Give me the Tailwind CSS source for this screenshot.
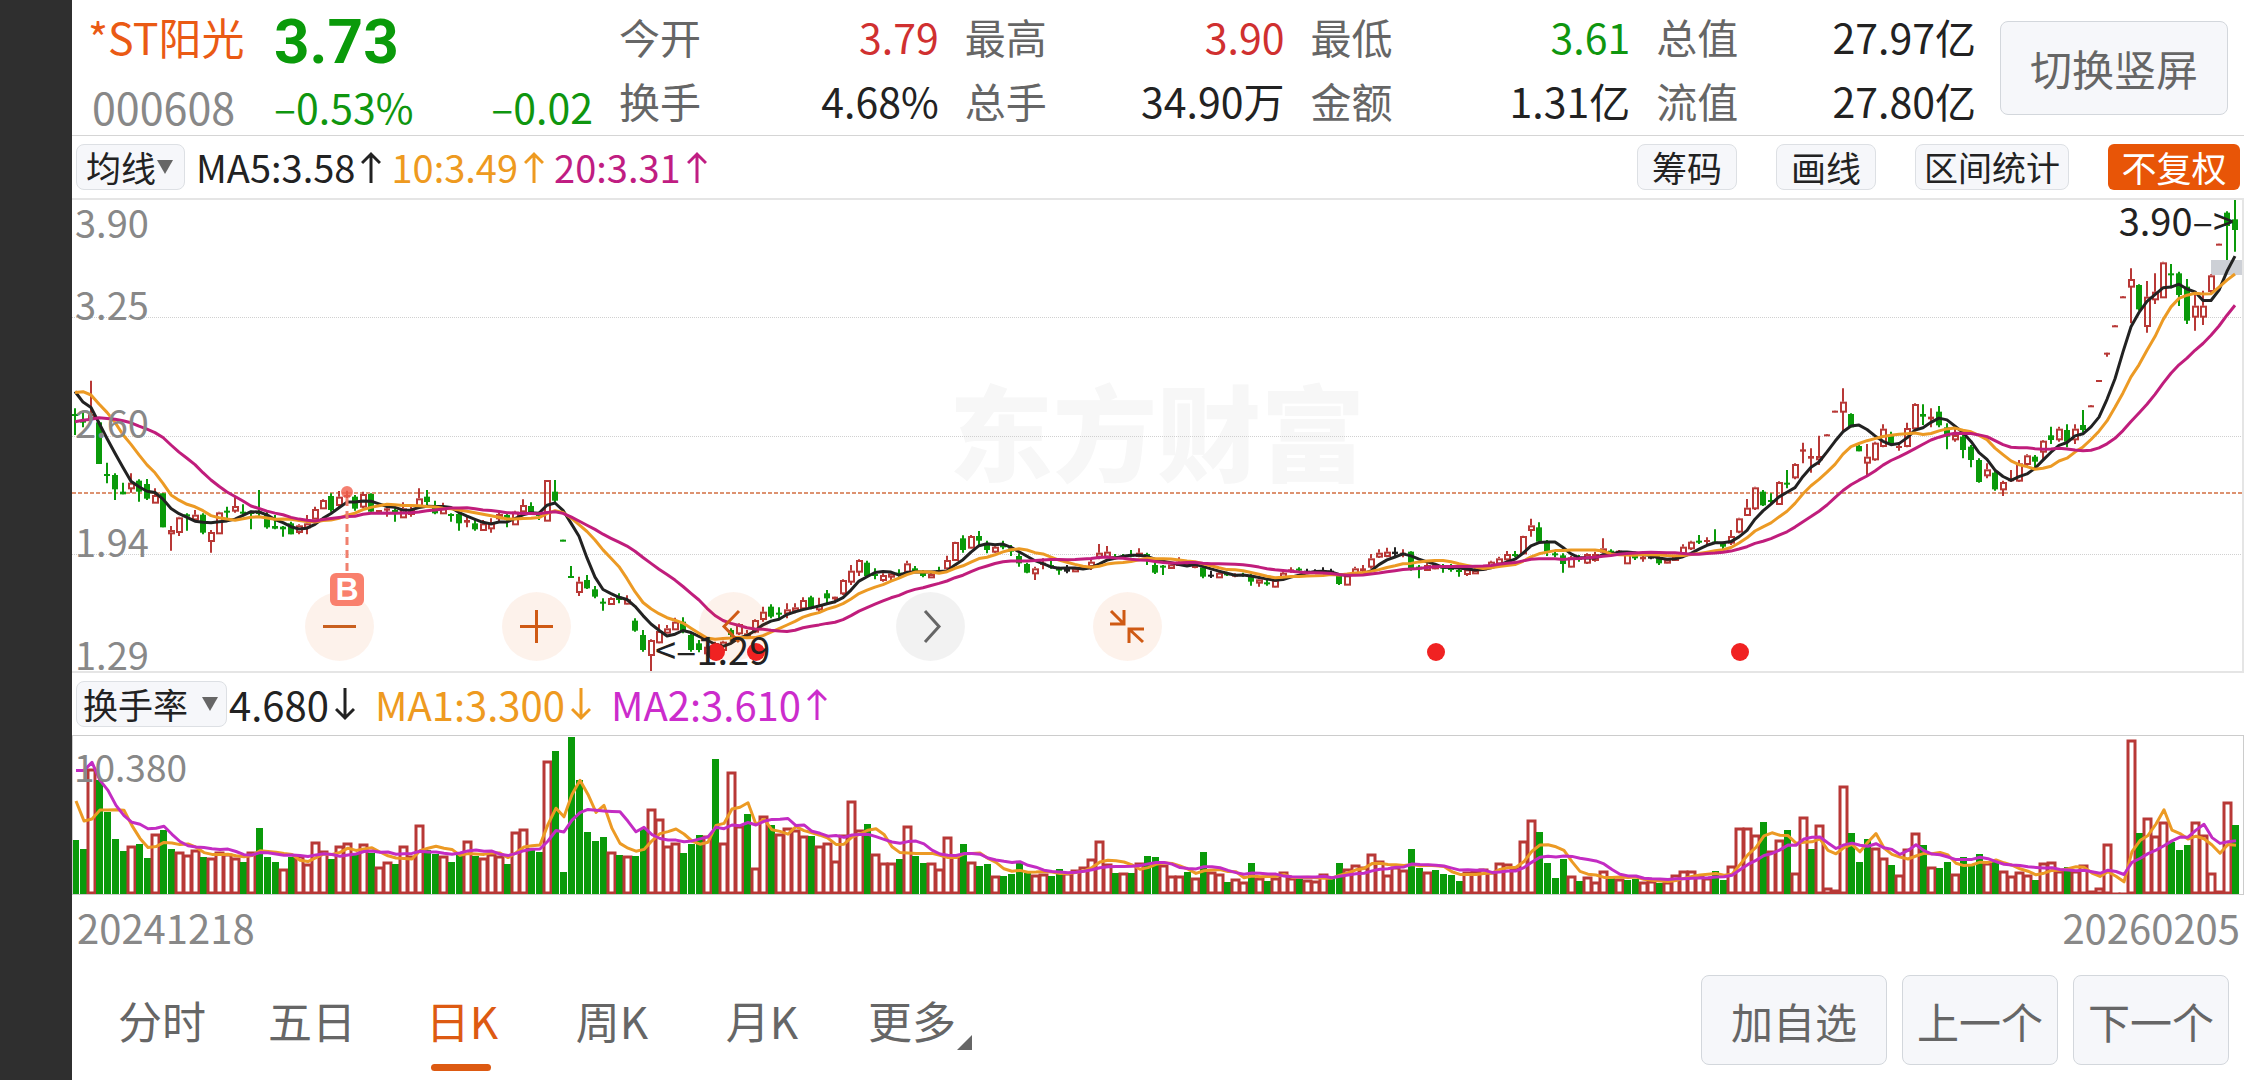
<!DOCTYPE html>
<html lang="zh-CN">
<head>
    <meta charset="UTF-8">
    <meta name="viewport" content="width=device-width, initial-scale=1.0">
    <title>*ST阳光 日K</title>
    <script src="https://cdn.jsdelivr.net/npm/@tailwindcss/browser@4"></script>
</head>
<body class="bg-white min-h-screen flex font-['Noto_Sans_CJK_SC',sans-serif] text-[#222]">
    <div class="w-[72px] shrink-0 bg-[#2f2f2f]"></div>

    <main class="flex-1 min-w-0 flex flex-col">
        <!-- quote -->
        <header class="flex items-center border-b border-[#d5d5d5] pt-1 pb-[3px] pr-4 text-[41px] leading-[64px]">
            <div class="w-[547px] shrink-0 pl-4">
                <div class="flex">
                    <h1 class="w-[186px] text-[43px] text-[#ea5a14]">*ST阳光</h1>
                    <span class="text-[62px] leading-[76px] font-bold text-[#0a9a0a] font-[Roboto,sans-serif]">3.73</span>
                </div>
                <div class="flex pr-[26px] leading-[52px] text-[#0f960f]">
                    <span class="w-[186px] pl-1 text-[43px] text-[#888]">000608</span>
                    <span>–0.53%</span>
                    <span class="ml-auto">–0.02</span>
                </div>
            </div>
            <dl class="flex-1 grid grid-cols-4 gap-x-[26px]">
                <div class="flex justify-between"><dt class="text-[#666]">今开</dt><dd class="text-[#d03030]">3.79</dd></div>
                <div class="flex justify-between"><dt class="text-[#666]">最高</dt><dd class="text-[#d03030]">3.90</dd></div>
                <div class="flex justify-between"><dt class="text-[#666]">最低</dt><dd class="text-[#0f960f]">3.61</dd></div>
                <div class="flex justify-between"><dt class="text-[#666]">总值</dt><dd>27.97亿</dd></div>
                <div class="flex justify-between"><dt class="text-[#666]">换手</dt><dd>4.68%</dd></div>
                <div class="flex justify-between"><dt class="text-[#666]">总手</dt><dd>34.90万</dd></div>
                <div class="flex justify-between"><dt class="text-[#666]">金额</dt><dd>1.31亿</dd></div>
                <div class="flex justify-between"><dt class="text-[#666]">流值</dt><dd>27.80亿</dd></div>
            </dl>
            <button class="ml-6 w-[228px] h-[94px] rounded-lg border border-[#d3d7dc] bg-[#f6f7fa] text-[42px] text-[#666]">切换竖屏</button>
        </header>

        <!-- moving averages -->
        <div class="flex items-center h-[62px] pl-1 pr-1 text-[38px] leading-[44px]">
            <button class="flex items-center gap-[1px] h-[46px] w-[109px] pl-[9px] rounded-lg border border-[#dde0e4] bg-[#f6f7fa] text-[35px]">
                均线
                <svg class="w-[16px] h-[14px]" viewBox="0 0 16 14"><path d="M0 0H16L8 14Z" fill="#666"/></svg>
            </button>
            <span class="ml-[11px]">MA5:3.58</span>
            <svg class="ml-[6px] w-5 h-[34px]" viewBox="0 0 20 34" fill="none" stroke="#222" stroke-width="3"><path d="M10 33V4M1 13L10 4L19 13"/></svg>
            <span class="ml-[10px] text-[#ee9a20]">10:3.49</span>
            <svg class="ml-[6px] w-5 h-[34px]" viewBox="0 0 20 34" fill="none" stroke="#ee9a20" stroke-width="3"><path d="M10 33V4M1 13L10 4L19 13"/></svg>
            <span class="ml-[10px] text-[#c01d82]">20:3.31</span>
            <svg class="ml-[6px] w-5 h-[34px]" viewBox="0 0 20 34" fill="none" stroke="#c01d82" stroke-width="3"><path d="M10 33V4M1 13L10 4L19 13"/></svg>
            <div class="ml-auto flex gap-[39px] text-[35px]">
                <button class="h-[46px] w-[100px] rounded-lg border border-[#dde0e4] bg-[#f6f7fa]">筹码</button>
                <button class="h-[46px] w-[100px] rounded-lg border border-[#dde0e4] bg-[#f6f7fa]">画线</button>
                <button class="h-[46px] w-[154px] rounded-lg border border-[#dde0e4] bg-[#f6f7fa] text-[34px]">区间统计</button>
                <button class="h-[46px] w-[132px] rounded-md bg-[#e85507] text-white">不复权</button>
            </div>
        </div>

        <!-- candles -->
        <section class="relative border-y-2 border-r-2 border-[#e5e5e5] text-[38px] leading-[40px]">
            <div class="absolute inset-x-0 top-[174px] text-center text-[104px] leading-[110px] font-black text-[#f7f7f7]">东方财富</div>
            <svg id="kline" class="relative block w-full h-[471px]" viewBox="0 0 2170 471" preserveAspectRatio="none"></svg>

            <div class="absolute left-[3px] top-[2px] text-[#888]">3.90</div>
            <div class="absolute left-[3px] top-[84px] text-[#888]">3.25</div>
            <div class="absolute left-[3px] top-[202px] text-[#888]">2.60</div>
            <div class="absolute left-[3px] top-[321px] text-[#888]">1.94</div>
            <div class="absolute left-[3px] top-[434px] text-[#888]">1.29</div>
            <div class="absolute right-[8px] top-0">3.90–&gt;</div>

            <div class="absolute left-[233px] top-[392px] flex gap-32">
                <button aria-label="缩小" class="size-[69px] rounded-full bg-[#ea5504]/8">
                    <svg viewBox="0 0 69 69" fill="none" stroke="#c9601f" stroke-width="3"><path d="M18 34.500H51"/></svg>
                </button>
                <button aria-label="放大" class="size-[69px] rounded-full bg-[#ea5504]/8">
                    <svg viewBox="0 0 69 69" fill="none" stroke="#cf5a14" stroke-width="3"><path d="M18 34.500H51M34.500 18V51"/></svg>
                </button>
                <button aria-label="左移" class="size-[69px] rounded-full bg-[#ea5504]/8">
                    <svg viewBox="0 0 69 69" fill="none" stroke="#cf5a14" stroke-width="3"><path d="M40 19L25 34.500L40 50"/></svg>
                </button>
                <button aria-label="右移" class="size-[69px] rounded-full bg-black/5">
                    <svg viewBox="0 0 69 69" fill="none" stroke="#666" stroke-width="3"><path d="M29 19L43 34.500L29 50"/></svg>
                </button>
                <button aria-label="退出全屏" class="size-[69px] rounded-full bg-[#ea5504]/8">
                    <svg viewBox="0 0 69 69" fill="none" stroke="#cf5a14" stroke-width="3"><path d="M17 32H31V18M18 19L31 32M36 51V37H51M36 37L50 50"/></svg>
                </button>
            </div>
            <div class="absolute left-[258px] top-[373px] w-[34px] h-[33px] rounded-md bg-[#f9806d] text-center text-[32px] leading-[32px] font-bold text-white font-['Liberation_Sans',sans-serif]">B</div>
            <div class="absolute left-[635px] top-[443px] size-[18px] rounded-full bg-[#f02222]"></div>
            <div class="absolute left-[675px] top-[443px] size-[18px] rounded-full bg-[#f02222]"></div>
            <div class="absolute left-[1355px] top-[443px] size-[18px] rounded-full bg-[#f02222]"></div>
            <div class="absolute left-[1659px] top-[443px] size-[18px] rounded-full bg-[#f02222]"></div>
            <div class="absolute left-[583px] top-[429px]">&lt;–1.29</div>
        </section>

        <!-- turnover -->
        <div class="flex items-center h-[62px] pl-1 text-[40px] leading-[44px]">
            <button class="flex items-center gap-[14px] h-[46px] w-[151px] pl-[6px] rounded-lg border border-[#dde0e4] bg-[#f6f7fa] text-[35px]">
                换手率
                <svg class="w-[16px] h-[14px]" viewBox="0 0 16 14"><path d="M0 0H16L8 14Z" fill="#666"/></svg>
            </button>
            <span class="ml-[2px]">4.680</span>
            <svg class="ml-[6px] w-5 h-[34px]" viewBox="0 0 20 34" fill="none" stroke="#222" stroke-width="3"><path d="M10 1V31M1 22L10 31L19 22"/></svg>
            <span class="ml-5 text-[#ee9a20]">MA1:3.300</span>
            <svg class="ml-[6px] w-5 h-[34px]" viewBox="0 0 20 34" fill="none" stroke="#ee9a20" stroke-width="3"><path d="M10 1V31M1 22L10 31L19 22"/></svg>
            <span class="ml-5 text-[#cc2ccc]">MA2:3.610</span>
            <svg class="ml-[6px] w-5 h-[34px]" viewBox="0 0 20 34" fill="none" stroke="#cc2ccc" stroke-width="3"><path d="M10 33V4M1 13L10 4L19 13"/></svg>
        </div>
        <section class="relative border border-[#ccc]">
            <svg id="turnover" class="block w-full h-[158px]" viewBox="0 0 2170 158" preserveAspectRatio="none"></svg>
            <div class="absolute left-[1px] top-[10px] text-[37px] leading-[40px] text-[#888]">10.380</div>
        </section>
        <div class="flex justify-between pl-[5px] pr-1 text-[40px] leading-[64px] text-[#888]">
            <span>20241218</span>
            <span>20260205</span>
        </div>

        <!-- period -->
        <footer class="mt-auto mb-[15px] flex items-center justify-between pl-[15px] pr-[15px] text-[#666]">
            <nav class="flex text-[44px] leading-[88px] text-center">
                <a href="#" class="w-[150px]">分时</a>
                <a href="#" class="w-[150px]">五日</a>
                <a href="#" class="relative w-[150px] text-[#dd5a12]">日K<span class="absolute left-11 bottom-[-7px] w-[60px] h-[7px] rounded-full bg-[#dd5a12]"></span></a>
                <a href="#" class="w-[150px]">周K</a>
                <a href="#" class="w-[150px]">月K</a>
                <a href="#" class="relative w-[150px]">更多<svg class="absolute right-[15px] bottom-[14px] w-[15px] h-[15px]" viewBox="0 0 15 15"><path d="M15 0V15H0Z" fill="#666"/></svg></a>
            </nav>
            <div class="flex gap-[15px] text-[42px]">
                <button class="w-[186px] h-[90px] rounded-lg border border-[#d3d7dc] bg-[#f6f7fa]">加自选</button>
                <button class="w-[156px] h-[90px] rounded-lg border border-[#d3d7dc] bg-[#f6f7fa]">上一个</button>
                <button class="w-[156px] h-[90px] rounded-lg border border-[#d3d7dc] bg-[#f6f7fa]">下一个</button>
            </div>
        </footer>
    </main>

    <script>
        const STEP = 8;
        const COLORS = { r: "#b83836", g: "#0a9a0a", b: "#222" };

        // one token per day: colour, high, body top, body bottom, low (thirds of a pixel from the top)
        const blocks = [
            { base: -30, rows: `g655,672,678,735 g665,690,698,712 r572,672,685,690 g693,697,822,822 g818,852,858,880
g850,855,898,930 g878,905,913,913 r850,878,895,908 g868,872,905,935 g867,882,926,930
r895,915,938,938 g910,910,1012,1012 r1008,1020,1030,1082 r980,982,1026,1038 g970,973,980,1022
r960,974,988,990 g970,974,1028,1033 r1020,1026,1053,1088 r965,967,1030,1030 g950,962,968,985
r920,948,962,968 g943,965,970,975 g962,965,972,1018 g900,965,972,980 g965,975,1012,1016
g975,1008,1016,1018 g1008,1010,1018,1040 g995,1000,1033,1033 r1003,1006,1026,1033 r975,1000,1012,1033
r950,957,986,986 r928,930,955,955 g910,918,960,965 r903,920,945,950 r902,915,922,935
g915,920,956,962 r905,912,950,955 g910,912,965,965 r960,960,968,968 r955,955,962,980
g955,960,968,995 r937,955,982,984 r943,960,972,980 r895,925,950,955 g900,920,936,950
g932,945,970,973 r938,955,970,972 g970,972,976,995 g965,972,1000,1022 r980,990,998,1012
g990,1000,1018,1022 r990,1000,1020,1022 r985,1000,1015,1028 r965,972,985,995 g968,975,990,1012
r962,965,1003,1005 r928,945,964,968 g937,948,970,972 g965,970,978,990 r870,870,992,992
g870,905,932,940 g1049,1049,1054,1054 g1128,1158,1162,1163 r1160,1175,1206,1218 g1155,1170,1195,1197
g1188,1198,1220,1225 g1225,1235,1240,1262 r1222,1224,1242,1242` },
            { base: 750, rows: `g430,440,450,460 r436,448,461,463 g505,512,542,545 g540,555,600,605 r568,570,615,668
r523,543,577,580 r525,535,548,550 r503,515,538,540 g502,515,545,550 g550,555,600,605
g570,580,600,607 r585,590,610,618 r575,580,600,625 r572,575,600,605 g535,540,555,570
r520,522,550,555 r540,550,560,565 r508,510,545,550 r470,485,507,515 g463,470,500,505
g472,488,494,505 r460,478,490,505 r460,472,482,490 r442,450,475,480 g437,442,475,478
r443,465,478,485 g420,430,445,460 r440,440,448,460 r388,390,430,435 r345,362,395,405
r328,330,365,378 g332,338,378,383 g355,372,378,388 r370,375,390,395 r365,370,380,390
g358,368,375,380 r332,340,365,370 g348,355,365,368 g360,368,378,382 r368,372,382,384
g350,360,368,370 r317,330,355,358 r275,276,330,332 g256,265,300,308 r255,258,293,295
g243,258,272,285 g272,280,300,310 r285,290,305,308 g272,282,292,298 g285,295,305,318
g310,318,340,350 g338,342,368,370 r350,355,370,390 r325,338,345,358 g332,345,352,356
g350,352,362,374 b345,355,365,370 r352,354,364,366 r345,350,356,358 r330,335,348,360
r282,308,320,328 r288,305,320,325 g312,318,325,328 g312,318,322,325 g300,312,320,322
r295,308,318,322 g308,312,320,345 g335,345,368,372 g345,347,351,375 r340,343,354,356
r322,335,345,348 r338,342,346,348 r342,346,354,355 g348,352,380,385 b362,374,380,384
r365,368,382,384 g365,370,376,378 r370,374,380,382 g368,372,378,380 g372,378,395,407
r385,388,398,410 g388,397,402,407 r385,390,410,412 r358,368,380,382 r352,358,365,368
g352,356,362,368 b356,362,366,370 b358,364,368,370 b352,362,366,368 b356,362,366,370
g370,374,402,405 r372,376,404,405 r350,355,370,372 r345,355,364,368 r312,325,350,356
r298,308,320,324 r293,305,318,322 b292,305,312,318 r298,308,316,322 g304,305,355,362
g345,350,358,385 r340,345,360,362 r340,345,355,358 g342,348,356,368 g342,352,360,365
g352,360,366,380 r355,358,372,378 r352,360,370,371 r345,348,358,360 r332,335,350,352
r320,325,340,342 r303,312,328,332 g303,312,318,322 r257,258,310,312 r206,226,240,260
g217,232,275,280 g270,278,305,318 g305,310,315,322 g310,316,342,368 r318,322,350,352
g315,322,330,335 r310,312,338,342 r305,312,330,335 r265,295,305,310 g298,302,310,315
r300,302,310,312 r308,310,340,342 g305,310,325,330 r318,320,328,335 b315,320,325,328
g312,322,340,345 r325,328,338,340 r315,318,330,332 r283,290,310,315 r272,275,295,300
g255,272,276,282 r262,270,276,282 g238,275,280,282 g275,280,290,298 r240,258,278,285` },
            { base: -30, rows: `r983,985,1025,1030 r927,953,975,978 r890,892,955,960 g900,905,946,948 g910,930,936,940
r874,876,942,944 g840,878,884,895 r820,822,862,868 r758,778,785,820 r775,798,806,848
r737,798,808,825 r733,733,738,738 r662,662,667,667 r595,635,665,725 g670,672,712,712
g765,768,784,784 r762,800,818,855 r755,758,808,812 r703,716,768,772 g725,738,762,765
r762,768,774,782 r698,714,768,772 r640,642,715,718 g643,672,680,705 r655,680,688,712
g648,665,706,712 g700,712,740,778 r715,735,748,755 g735,740,780,805 g765,770,810,832
g805,810,876,878 r820,838,856,865 g840,848,898,902 r872,876,898,918 r840,868,872,875
r810,820,872,875 r793,796,822,828 g795,800,815,835 r750,752,785,812 g710,736,750,762
r710,716,748,755 g703,720,755,772 r703,716,748,762 g660,705,720,728 r646,646,650,650
r570,570,574,574 r488,488,494,500 r406,406,410,410 r319,319,323,323 r235,267,290,400
g283,285,358,362 r273,320,408,428 r250,305,328,342 r215,217,322,324 g222,250,256,295
g245,250,315,348 g267,290,392,402 r310,347,380,422 r302,347,380,405 r253,256,303,315
r161,161,165,165 g64,68,108,210 g30,88,120,185` }
        ];

        // colour and bar height per day
        const turnover = `g54 g45 r125 g114 g82 g55 g43 r48 g50 g36 r60 g64 g45 r42 r39 r44 g37 r36 r42 r40
r36 g32 r42 g66 g37 g32 r25 g37 r38 r30 r52 r43 g35 r48 r51 g41 r50 g41 r27 r32
g30 r48 r38 r69 g44 g40 r38 g32 g39 r53 g38 r36 r40 r38 g30 r62 r65 g46 g42 r133
g143 g22 g157 g114 g62 g53 g57 r42 g39 r38 g38 g66 r85 r75 r48 r51 g41 g50 g59 r58
g135 r51 r122 r68 g80 r26 r78 g69 r60 r66 r64 r58 g58 r48 r51 r33 r59 r93 r64 g70
r40 r31 r31 g35 r68 g38 g31 r31 r25 r57 r38 g50 r32 g28 g30 r18 g18 g20 g32 g21
r19 r20 g18 g25 r21 r24 r27 r35 r53 r30 g21 r21 g21 r31 g38 g37 r29 r18 r18 g22
r16 g42 r22 r20 g12 r15 r12 g31 r16 g13 r16 r22 r16 g16 r14 r13 r20 g16 g31 r25
r29 r27 r40 r33 r19 r27 r24 g45 g26 r22 g24 g20 g19 g13 r22 r23 r25 r22 r31 r30
r26 r53 r74 g62 g31 g16 g35 r18 g13 r17 r12 r23 g18 r15 g14 g15 r12 r13 g11 r12
r19 r23 r23 r18 r16 g23 g14 r28 r66 r66 r59 g72 r43 r54 g64 r21 r77 g45 r69 r6
r4 r108 g61 g32 g55 r46 r36 g29 r19 r45 r61 g49 r27 g26 g32 r20 g37 g30 g40 r31
g32 r23 r18 r22 r19 g14 r31 r32 r23 g27 r23 r29 r3 r6 r50 r1 r1 r154 g61 r76
r58 r72 g52 g44 g49 r72 r59 r21 r3 r92 g69`;

        // values before the first visible day, for the averages
        const closeBefore = [798, 732, 902, 818, 858, 813, 758, 705, 746, 710, 718, 572, 552, 608, 598, 540, 590, 590, 625].map(v => (v - 30) / 3);
        const turnoverBefore = [45, 45, 294, 182, 205, 145, 115, 69, 82];

        const centre = i => 3 + i * STEP;

        function average(values, before, n) {
            const all = before.concat(values);
            return values.map((_, i) => {
                const end = before.length + i + 1;
                return all.slice(end - n, end).reduce((a, b) => a + b, 0) / n;
            });
        }

        function line(ys, color, width) {
            const points = ys.map((y, i) => centre(i) + "," + y.toFixed(1)).join(" ");
            return `<polyline points="${points}" fill="none" stroke="${color}" stroke-width="${width}" stroke-linejoin="round"/>`;
        }

        function drawKline() {
            let out = "";
            for (const y of [117, 236, 354]) {
                out += `<path d="M0 ${y}.5H2170" stroke="#d0d0d0" stroke-dasharray="1 1"/>`;
            }
            out += `<path d="M0 293H2170" stroke="#dd9270" stroke-width="2" stroke-dasharray="4 2"/>`;
            out += `<rect x="2139" y="60" width="31" height="15" fill="#cdd0d6"/>`;

            const closes = [];
            let i = 0;
            for (const block of blocks) {
                for (const token of block.rows.split(/\s+/)) {
                    const kind = token[0];
                    const [high, top, bottom, low] = token.slice(1).split(",").map(v => (Number(v) + block.base) / 3);
                    const x = centre(i);
                    const color = COLORS[kind];
                    if (kind === "r" && bottom - top > 3) {
                        out += `<path d="M${x} ${high}V${top}M${x} ${bottom}V${low}" stroke="${color}" stroke-width="2"/>`;
                        out += `<rect x="${x - 2}" y="${top + 1}" width="5" height="${bottom - top - 1}" fill="none" stroke="${color}" stroke-width="2"/>`;
                    } else {
                        out += `<path d="M${x} ${high}V${low}" stroke="${color}" stroke-width="2"/>`;
                        out += `<rect x="${x - 3}" y="${top}" width="6" height="${Math.max(bottom - top, 2)}" fill="${color}"/>`;
                    }
                    closes.push(kind === "r" ? top : bottom);
                    i++;
                }
            }
            out += line(average(closes, closeBefore, 5), "#222", 3);
            out += line(average(closes, closeBefore, 10), "#ec9a24", 3);
            out += line(average(closes, closeBefore, 20), "#c01d7c", 3);

            // buy mark
            out += `<circle cx="275" cy="292" r="6" fill="#f2604d" fill-opacity=".8"/>`;
            out += `<path d="M275 298V371" stroke="#f0806e" stroke-width="3" stroke-dasharray="8 5"/>`;
            document.getElementById("kline").innerHTML = out;
        }

        function drawTurnover() {
            const floor = 158;
            const values = [];
            let out = "";
            turnover.split(/\s+/).forEach((token, i) => {
                const h = Number(token.slice(1));
                const x = centre(i);
                values.push(h);
                if (token[0] === "r") {
                    out += `<rect x="${x - 4}" y="${floor - h + 1}" width="7" height="${Math.max(h - 2, 1)}" fill="#fff" stroke="#b83836" stroke-width="3"/>`;
                } else {
                    out += `<rect x="${x - 4}" y="${floor - h}" width="7" height="${h}" fill="#0a9a0a"/>`;
                }
            });
            out += line(average(values, turnoverBefore, 5).map(v => floor - v), "#ec9a24", 3);
            out += line(average(values, turnoverBefore, 10).map(v => floor - v), "#c32cc3", 3);
            document.getElementById("turnover").innerHTML = out;
        }

        drawKline();
        drawTurnover();
    </script>
</body>
</html>
